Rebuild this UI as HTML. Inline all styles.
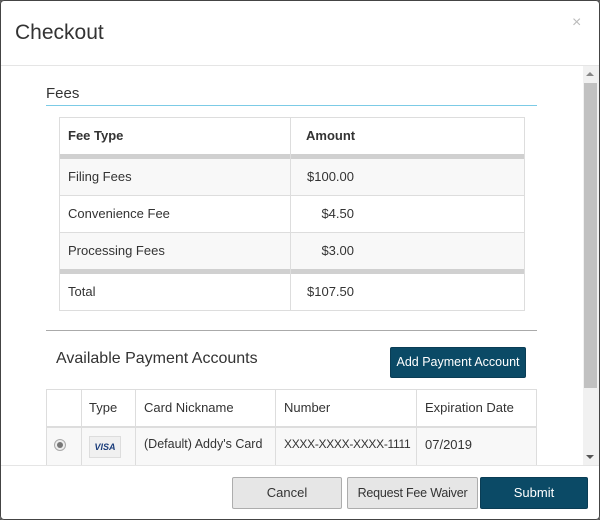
<!DOCTYPE html>
<html><head><style>
*{margin:0;padding:0;box-sizing:border-box}
body{width:600px;height:520px;background:#555;font-family:"Liberation Sans",sans-serif;color:#333;position:relative;overflow:hidden}
.m{position:absolute;left:0;top:0;width:600px;height:520px;background:#fff;border-radius:4px;overflow:hidden}
.a{position:absolute}
.t{font-size:13px;white-space:nowrap}
.hl{position:absolute;height:1px;background:#ddd}
.vl{position:absolute;width:1px;background:#ddd}
.btn{position:absolute;font-size:13px;text-align:center;border-radius:2px;white-space:nowrap}
</style></head><body><div class="m">
<div class="a" style="left:15px;top:21px;font-size:21px;color:#333">Checkout</div>
<div class="a" style="left:572px;top:14px;font-size:16px;color:#bbb">×</div>
<div class="hl" style="left:0;top:65px;width:600px;background:#e5e5e5"></div>
<!-- scrollbar -->
<div class="a" style="left:583px;top:66px;width:16px;height:399px;background:#f1f1f1"></div>
<div class="a" style="left:584px;top:83px;width:13px;height:305px;background:#c1c1c1"></div>
<div class="a" style="left:586px;top:72px;width:0;height:0;border-left:4px solid transparent;border-right:4px solid transparent;border-bottom:4px solid #888"></div>
<div class="a" style="left:586px;top:455px;width:0;height:0;border-left:4px solid transparent;border-right:4px solid transparent;border-top:4px solid #555"></div>

<div class="a" style="left:46px;top:85px;font-size:15px">Fees</div>
<div class="a" style="left:46px;top:105px;width:491px;height:1px;background:#7ccbe6"></div>
<!-- fee table -->
<div class="a" style="left:59px;top:117px;width:466px;height:194px;border:1px solid #ddd"></div>
<div class="a" style="left:60px;top:159px;width:464px;height:37px;background:#f8f8f8"></div>
<div class="a" style="left:60px;top:233px;width:464px;height:36px;background:#f8f8f8"></div>
<div class="a" style="left:60px;top:154px;width:464px;height:5px;background:#d0d0d0"></div>
<div class="a" style="left:60px;top:269px;width:464px;height:5px;background:#d0d0d0"></div>
<div class="hl" style="left:60px;top:195px;width:464px"></div>
<div class="hl" style="left:60px;top:232px;width:464px"></div>
<div class="vl" style="left:290px;top:118px;height:192px"></div>
<div class="a t" style="left:68px;top:128px;font-weight:bold">Fee Type</div>
<div class="a t" style="left:306px;top:128px;font-weight:bold">Amount</div>
<div class="a t" style="left:68px;top:169px">Filing Fees</div>
<div class="a t" style="left:68px;top:206px">Convenience Fee</div>
<div class="a t" style="left:68px;top:243px">Processing Fees</div>
<div class="a t" style="left:68px;top:284px">Total</div>
<div class="a t" style="left:254px;width:100px;text-align:right;top:169px">$100.00</div>
<div class="a t" style="left:254px;width:100px;text-align:right;top:206px">$4.50</div>
<div class="a t" style="left:254px;width:100px;text-align:right;top:243px">$3.00</div>
<div class="a t" style="left:254px;width:100px;text-align:right;top:284px">$107.50</div>

<div class="a" style="left:46px;top:330px;width:491px;height:1px;background:#aaa"></div>
<div class="a" style="left:56px;top:350px;font-size:16px">Available Payment Accounts</div>
<div class="btn" style="left:390px;top:347px;width:136px;height:31px;background:#0b4a66;color:#fff;line-height:29px;border:1px solid #0a3d55;font-size:12.5px">Add Payment Account</div>
<!-- accounts table -->
<div class="a" style="left:46px;top:389px;width:491px;height:80px;border:1px solid #ddd"></div>
<div class="a" style="left:47px;top:427px;width:489px;height:40px;background:#f8f8f8"></div>
<div class="hl" style="left:47px;top:426px;width:489px;height:2px"></div>
<div class="vl" style="left:81px;top:390px;height:76px"></div>
<div class="vl" style="left:135px;top:390px;height:76px"></div>
<div class="vl" style="left:275px;top:390px;height:76px"></div>
<div class="vl" style="left:416px;top:390px;height:76px"></div>
<div class="a t" style="left:89px;top:400px">Type</div>
<div class="a t" style="left:144px;top:400px">Card Nickname</div>
<div class="a t" style="left:284px;top:400px">Number</div>
<div class="a t" style="left:425px;top:400px">Expiration Date</div>
<div class="a" style="left:54px;top:439px;width:12px;height:12px;border-radius:50%;border:1px solid #aaa;background:#eee"></div>
<div class="a" style="left:57px;top:442px;width:6px;height:6px;border-radius:50%;background:#777"></div>
<div class="a" style="left:89px;top:436px;width:32px;height:22px;background:#f0f0f0;border:1px solid #ddd;font-size:9px;font-weight:bold;color:#1a3c7a;text-align:center;line-height:21px;font-style:italic">VISA</div>
<div class="a t" style="left:144px;top:437px;font-size:12.5px">(Default) Addy's Card</div>
<div class="a t" style="left:284px;top:437px;font-size:12px;letter-spacing:-0.3px">XXXX-XXXX-XXXX-1111</div>
<div class="a t" style="left:425px;top:437px">07/2019</div>

<div class="a" style="left:0;top:465px;width:600px;height:55px;background:#fff;border-top:1px solid #e5e5e5"></div>
<div class="btn" style="left:232px;top:477px;width:110px;height:32px;background:#e6e6e6;border:1px solid #adadad;line-height:30px">Cancel</div>
<div class="btn" style="left:347px;top:477px;width:131px;height:32px;background:#e6e6e6;border:1px solid #adadad;line-height:30px;font-size:12.5px;letter-spacing:-0.2px">Request Fee Waiver</div>
<div class="btn" style="left:480px;top:477px;width:108px;height:32px;background:#0b4a66;border:1px solid #0a3d55;color:#fff;line-height:30px">Submit</div>
</div>
<div class="a" style="left:0;top:0;width:600px;height:520px;border:1px solid #444;border-radius:4px"></div>
</body></html>
